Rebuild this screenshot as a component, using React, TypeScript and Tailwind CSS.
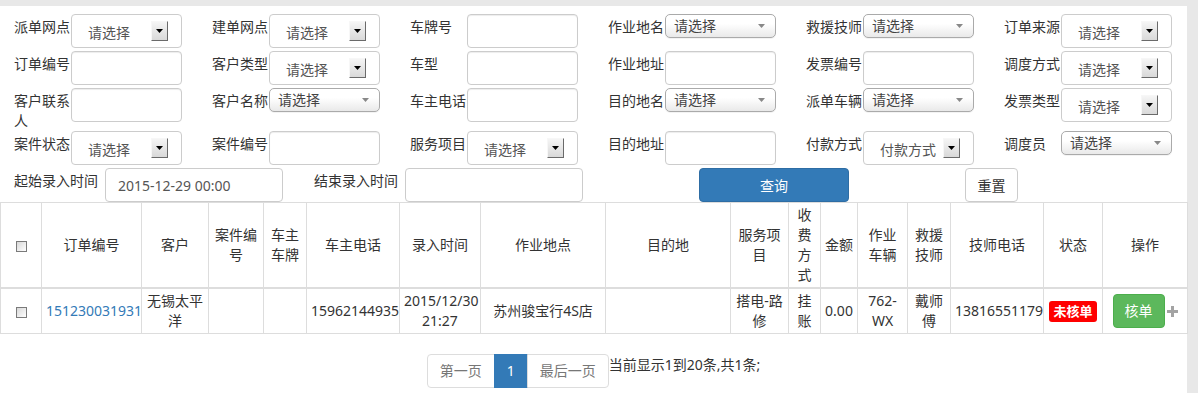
import React from "react"

const labelCls = "w-[57px] shrink-0 pt-[3px] leading-5 text-[14px] text-[#333]"

function Field({ label, children }: { label: string; children: React.ReactNode }) {
  return (
    <div className="flex items-start">
      <div className={labelCls}>{label}</div>
      {children}
    </div>
  )
}

function TextInput() {
  return (
    <div className="w-[111px] h-[34px] mb-[3px] rounded border border-[#ccc] bg-white shadow-[inset_0_1px_1px_rgba(0,0,0,0.075)]" />
  )
}

// native-looking select with the little 3d drop button
function OldSelect({ text = "请选择" }: { text?: string }) {
  return (
    <div className="flex items-center w-[111px] h-[34px] mb-[3px] rounded border border-[#ccc] bg-white">
      <span className="ml-[16px] pt-[4px] leading-5 text-[14px] text-[#555] whitespace-nowrap">{text}</span>
      <span className="ml-auto mr-[13px] flex items-center justify-center w-[17px] h-[20px] border border-t-[#f7f7f7] border-l-[#f7f7f7] border-r-[#6a6a6a] border-b-[#6a6a6a] bg-linear-to-b from-[#f5f5f5] to-[#d9d9d9]">
        <svg width="7" height="4" viewBox="0 0 7 4">
          <path d="M0 0h7L3.5 4z" fill="#000" />
        </svg>
      </span>
    </div>
  )
}

// select2 style dropdown
function PickSelect() {
  return (
    <div className="flex items-center w-[111px] h-[24px] mb-[13px] pl-[8px] pr-[10px] rounded-[5px] border border-[#aaa] bg-linear-to-b from-white from-40% to-[#e9e9e9] shadow-[0_1px_0_#f3f3f3]">
      <span className="leading-5 text-[14px] text-[#444]">请选择</span>
      <svg className="ml-auto" width="7" height="4" viewBox="0 0 7 4">
        <path d="M0 0h7L3.5 4z" fill="#888" />
      </svg>
    </div>
  )
}

function Check() {
  return (
    <span className="inline-block align-middle w-[11px] h-[11px] border border-[#7a7a7a] bg-linear-to-br from-[#d8d8d8] to-white" />
  )
}

const colWidths = [41, 100, 67, 55, 43, 93, 81, 125, 125, 58, 32, 37, 50, 43, 93, 59, 85]

const headers = [
  "订单编号", "客户", "案件编号", "车主车牌", "车主电话", "录入时间", "作业地点", "目的地",
  "服务项目", "收费方式", "金额", "作业车辆", "救援技师", "技师电话", "状态", "操作",
]

const th = "border border-[#ddd] border-b-2 px-1 py-0.5 leading-5 font-normal text-center align-middle"
const td = "border border-[#ddd] px-1 py-0.5 leading-5 text-center align-middle"

export default function App() {
  return (
    <div className="w-[1198px] h-[393px] overflow-hidden bg-[#e8e8e8] text-[14px] text-[#333] font-['Noto_Sans','Noto_Sans_CJK_SC',sans-serif]">
      <div className="mt-[6px] w-[1187px] h-[387px] bg-white">
        <div className="pt-[8px] pl-[14px]">
          <div className="grid grid-cols-[repeat(6,168px)] gap-x-[30px]">
            <Field label="派单网点"><OldSelect /></Field>
            <Field label="建单网点"><OldSelect /></Field>
            <Field label="车牌号"><TextInput /></Field>
            <Field label="作业地名"><PickSelect /></Field>
            <Field label="救援技师"><PickSelect /></Field>
            <Field label="订单来源"><OldSelect /></Field>

            <Field label="订单编号"><TextInput /></Field>
            <Field label="客户类型"><OldSelect /></Field>
            <Field label="车型"><TextInput /></Field>
            <Field label="作业地址"><TextInput /></Field>
            <Field label="发票编号"><TextInput /></Field>
            <Field label="调度方式"><OldSelect /></Field>

            <Field label="客户联系人"><TextInput /></Field>
            <Field label="客户名称"><PickSelect /></Field>
            <Field label="车主电话"><TextInput /></Field>
            <Field label="目的地名"><PickSelect /></Field>
            <Field label="派单车辆"><PickSelect /></Field>
            <Field label="发票类型"><OldSelect /></Field>

            <Field label="案件状态"><OldSelect /></Field>
            <Field label="案件编号"><TextInput /></Field>
            <Field label="服务项目"><OldSelect /></Field>
            <Field label="目的地址"><TextInput /></Field>
            <Field label="付款方式"><OldSelect text="付款方式" /></Field>
            <Field label="调度员"><PickSelect /></Field>
          </div>

          <div className="flex items-start h-[34px]">
            <div className="pt-[3px] leading-5 whitespace-nowrap">起始录入时间</div>
            <div className="ml-[7px] flex items-center w-[178px] h-[34px] pl-[12px] rounded border border-[#ccc] text-[#555]">
              2015-12-29 00:00
            </div>
            <div className="ml-[31px] pt-[3px] leading-5 whitespace-nowrap">结束录入时间</div>
            <div className="ml-[7px] w-[178px] h-[34px] rounded border border-[#ccc]" />
            <button className="ml-[116px] w-[150px] h-[34px] rounded border border-[#2e6da4] bg-[#337ab7] text-white">
              查询
            </button>
            <button className="ml-[116px] w-[53px] h-[34px] rounded border border-[#ccc] bg-white text-[#333]">
              重置
            </button>
          </div>
        </div>

        <table className="table-fixed border-collapse w-[1187px]">
          <colgroup>
            {colWidths.map((w, i) => (
              <col key={i} style={{ width: w }} />
            ))}
          </colgroup>
          <thead>
            <tr>
              <th className={th}><Check /></th>
              {headers.map((h) => (
                <th key={h} className={h === "金额" ? th + " whitespace-nowrap" : th}>{h}</th>
              ))}
            </tr>
          </thead>
          <tbody>
            <tr>
              <td className={td}><Check /></td>
              <td className={td}><span className="text-[#337ab7]">151230031931</span></td>
              <td className={td}>无锡太平洋</td>
              <td className={td}></td>
              <td className={td}></td>
              <td className={td}>15962144935</td>
              <td className={td}>2015/12/30 21:27</td>
              <td className={td}>苏州骏宝行4S店</td>
              <td className={td}></td>
              <td className={td}>搭电-路修</td>
              <td className={td}>挂账</td>
              <td className={td}>0.00</td>
              <td className={td}>762-WX</td>
              <td className={td}>戴师傅</td>
              <td className={td}>13816551179</td>
              <td className={td}>
                <span className="inline-block px-[4px] rounded-[3px] bg-[#ff0000] text-white text-[13px] font-bold leading-[21px]">
                  未核单
                </span>
              </td>
              <td className={td}>
                <div className="flex items-center justify-center">
                  <button className="w-[52px] h-[34px] rounded border border-[#4cae4c] bg-[#5cb85c] text-white">
                    核单
                  </button>
                  <svg className="ml-[2px]" width="11" height="11" viewBox="0 0 11 11">
                    <path d="M4 0h3v11H4zM0 4h11v3H0z" fill="#a3a3a3" />
                  </svg>
                </div>
              </td>
            </tr>
          </tbody>
        </table>

        <div className="mt-[20px] flex justify-center items-start">
          <ul className="flex">
            <li className="px-3 py-[6px] leading-5 border border-[#ddd] rounded-l text-[#777]">第一页</li>
            <li className="-ml-px px-3 py-[6px] leading-5 border border-[#337ab7] bg-[#337ab7] text-white">1</li>
            <li className="-ml-px px-3 py-[6px] leading-5 border border-[#ddd] rounded-r text-[#777]">最后一页</li>
          </ul>
          <span className="leading-5 pt-[1px]">当前显示1到20条,共1条;</span>
        </div>
      </div>
    </div>
  )
}
